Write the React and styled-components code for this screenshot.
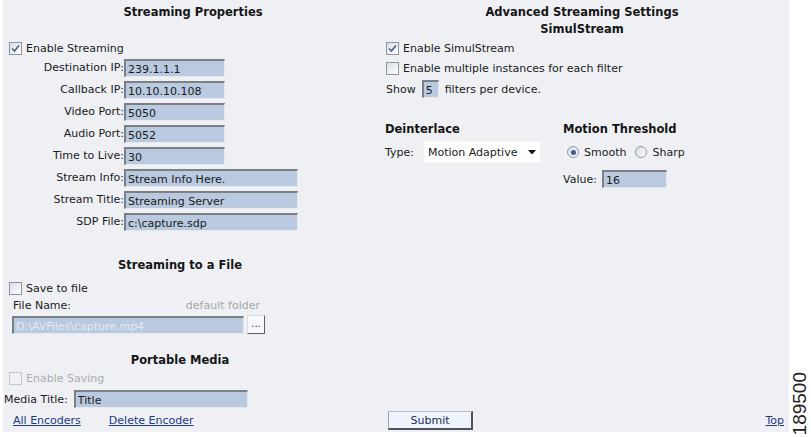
import styled, { createGlobalStyle } from "styled-components";

const GlobalStyle = createGlobalStyle`
  html, body {
    margin: 0;
    padding: 0;
    background: #ffffff;
  }
  body {
    font-family: "DejaVu Sans", Verdana, sans-serif;
    font-size: 11px;
    color: #1b1b1b;
  }
`;

const Page = styled.div`
  display: flex;
  width: 811px;
  height: 437px;
  padding-left: 3px;
  box-sizing: border-box;
`;

const Panel = styled.div`
  width: 786px;
  height: 432px;
  background: #eef0f4;
  display: grid;
  grid-template-columns: 380px 1fr;
  grid-template-rows: 1fr auto;
  padding: 5px 0 2px;
  box-sizing: border-box;
`;

const Strip = styled.div`
  flex: 1;
  display: flex;
  flex-direction: column;
  justify-content: flex-end;
  align-items: center;
  padding-bottom: 2px;
`;

const Rotated = styled.span`
  writing-mode: vertical-rl;
  transform: rotate(180deg);
  font-family: "Liberation Sans", Arial, sans-serif;
  font-size: 19px;
  line-height: 16px;
  color: #222;
`;

const Column = styled.div`
  display: flex;
  flex-direction: column;
  padding-left: ${({ $pl }) => $pl || 0}px;
`;

const Title = styled.div`
  font-weight: bold;
  font-size: 11.5px;
  line-height: 14px;
  text-align: center;
  color: #151515;
  padding-right: ${({ $pr }) => $pr || 0}px;
  margin-top: ${({ $mt }) => $mt || 0}px;
  margin-bottom: ${({ $mb }) => $mb || 0}px;
`;

const Heading = styled.div`
  font-weight: bold;
  font-size: 11.5px;
  line-height: 14px;
  color: #151515;
  margin-bottom: 5px;
`;

const CheckRow = styled.label`
  display: flex;
  align-items: center;
  gap: 4px;
  height: 18px;
  padding-left: ${({ $pl }) => $pl || 0}px;
  margin-top: ${({ $mt }) => $mt || 0}px;
  color: ${({ $disabled }) => ($disabled ? "#a9adb4" : "#1b1b1b")};
`;

const Box = styled.span`
  width: 13px;
  height: 13px;
  box-sizing: border-box;
  border: 1px solid ${({ $disabled }) => ($disabled ? "#c4c9d1" : "#8a96a8")};
  background: ${({ $disabled }) =>
    $disabled ? "#eef0f4" : "linear-gradient(135deg, #d9dee6, #ffffff)"};
  display: inline-flex;
  align-items: center;
  justify-content: center;
`;

const Radio = styled.span`
  width: 12px;
  height: 12px;
  box-sizing: border-box;
  border-radius: 50%;
  border: 1px solid #8e99aa;
  background: linear-gradient(135deg, #d6dbe3, #ffffff);
  display: inline-flex;
  align-items: center;
  justify-content: center;
  margin-left: ${({ $ml }) => $ml || 0}px;
  &::after {
    content: "";
    width: 5px;
    height: 5px;
    border-radius: 50%;
    background: ${({ $on }) => ($on ? "#3f5a86" : "transparent")};
  }
`;

const FieldGrid = styled.div`
  display: grid;
  grid-template-columns: 121px auto;
  row-gap: 4px;
  margin-top: 2px;
  align-items: center;
`;

const Label = styled.span`
  text-align: right;
  line-height: 14px;
`;

const Field = styled.input`
  width: ${({ $w }) => $w}px;
  height: 18px;
  box-sizing: border-box;
  margin: 0;
  padding: 2px 2px 0 2px;
  background: #b8c9e0;
  border-style: solid;
  border-width: 2px 1px 1px 2px;
  border-color: #7c7f84 #e6e9ee #e6e9ee #7c7f84;
  font-family: "DejaVu Sans", Verdana, sans-serif;
  font-size: 11px;
  line-height: 14px;
  color: ${({ disabled }) => (disabled ? "#e4e9f0" : "#1b1b1b")};
  outline: none;
`;

const Lower = styled.div`
  width: 354px;
  display: flex;
  flex-direction: column;
`;

const Spread = styled.div`
  display: flex;
  justify-content: space-between;
  width: 247px;
  margin-left: 10px;
  line-height: 14px;
  margin-top: 2px;
`;

const Muted = styled.span`
  color: #a3a6ab;
`;

const Inline = styled.div`
  display: flex;
  align-items: center;
  gap: ${({ $gap }) => $gap || 0}px;
  margin-left: ${({ $ml }) => $ml || 0}px;
  margin-top: ${({ $mt }) => $mt || 0}px;
  height: ${({ $h }) => ($h ? `${$h}px` : "auto")};
`;

const SmallButton = styled.span`
  width: 18px;
  height: 19px;
  box-sizing: border-box;
  background: #f6f8fc;
  border-style: solid;
  border-width: 1px;
  border-color: #d8dce3 #5e6166 #5e6166 #d8dce3;
  display: inline-flex;
  align-items: flex-end;
  justify-content: center;
  padding-bottom: 4px;
  font-size: 10px;
  line-height: 10px;
  color: #1f2e55;
`;

const Settings = styled.div`
  display: grid;
  grid-template-columns: 178px 1fr;
  margin-top: 24px;
`;

const Select = styled.div`
  width: 118px;
  height: 22px;
  box-sizing: border-box;
  background: #ffffff;
  border: 1px solid #f4f4f4;
  display: flex;
  align-items: center;
  justify-content: space-between;
  padding: 0 4px 0 4px;
`;

const Footer = styled.div`
  grid-column: 1 / span 2;
  display: grid;
  grid-template-columns: 380px 1fr;
  align-items: center;
  height: 19px;
`;

const Links = styled.div`
  display: flex;
  gap: 28px;
  padding-left: 10px;
`;

const Link = styled.a`
  color: #1d3a86;
  text-decoration: underline;
  cursor: pointer;
`;

const Actions = styled.div`
  display: flex;
  justify-content: space-between;
  align-items: center;
  padding: 0 5px;
`;

const Submit = styled.button`
  width: 85px;
  height: 19px;
  box-sizing: border-box;
  margin: 0;
  padding: 0;
  background: #eef3fc;
  border-style: solid;
  border-width: 1px 2px 2px 1px;
  border-color: #b7bcc6 #4f5257 #4f5257 #9aa0aa;
  font-family: "DejaVu Sans", Verdana, sans-serif;
  font-size: 11px;
  color: #1c2d57;
`;

const Check = () => (
  <svg width="9" height="9" viewBox="0 0 9 9">
    <path d="M1 4.5 L3.5 7 L8 1.5" fill="none" stroke="#4a5f86" strokeWidth="1.6" />
  </svg>
);

const Caret = () => (
  <svg width="8" height="5" viewBox="0 0 8 5">
    <path d="M0 0 H8 L4 4.5 Z" fill="#111" />
  </svg>
);

const fields = [
  ["Destination IP:", "239.1.1.1", 101],
  ["Callback IP:", "10.10.10.108", 101],
  ["Video Port:", "5050", 101],
  ["Audio Port:", "5052", 101],
  ["Time to Live:", "30", 101],
  ["Stream Info:", "Stream Info Here.", 174],
  ["Stream Title:", "Streaming Server", 174],
  ["SDP File:", "c:\\capture.sdp", 174],
];

export default function App() {
  return (
    <>
      <GlobalStyle />
      <Page>
        <Panel>
          <Column>
            <Title $mb={20}>Streaming Properties</Title>
            <CheckRow $pl={6}>
              <Box>
                <Check />
              </Box>
              Enable Streaming
            </CheckRow>
            <FieldGrid>
              {fields.map(([label, value, w]) => (
                <FieldRow key={label} label={label} value={value} w={w} />
              ))}
            </FieldGrid>

            <Lower>
              <Title $mt={27}>Streaming to a File</Title>
              <CheckRow $pl={6} $mt={7}>
                <Box />
                Save to file
              </CheckRow>
              <Spread>
                <span>File Name:</span>
                <Muted>default folder</Muted>
              </Spread>
              <Inline $gap={3} $ml={9} $mt={2}>
                <Field $w={232} disabled readOnly value="D:\AVFiles\capture.mp4" />
                <SmallButton>...</SmallButton>
              </Inline>
              <Title $mt={19}>Portable Media</Title>
              <CheckRow $pl={6} $mt={2} $disabled>
                <Box $disabled />
                Enable Saving
              </CheckRow>
              <Inline $gap={6} $ml={1} $mt={3}>
                <span>Media Title:</span>
                <Field $w={174} readOnly value="Title" />
              </Inline>
            </Lower>
          </Column>

          <Column $pl={2}>
            <Title $pr={10}>Advanced Streaming Settings</Title>
            <Title $pr={10} $mt={3}>
              SimulStream
            </Title>
            <CheckRow $pl={1} $mt={3}>
              <Box>
                <Check />
              </Box>
              Enable SimulStream
            </CheckRow>
            <CheckRow $pl={1} $mt={2}>
              <Box />
              Enable multiple instances for each filter
            </CheckRow>
            <Inline $gap={6} $ml={1} $mt={3}>
              <span>Show</span>
              <Field $w={17} readOnly value="5" />
              <span>filters per device.</span>
            </Inline>

            <Settings>
              <Column>
                <Heading>Deinterlace</Heading>
                <Inline $gap={9}>
                  <span>Type:</span>
                  <Select>
                    <span>Motion Adaptive</span>
                    <Caret />
                  </Select>
                </Inline>
              </Column>
              <Column>
                <Heading>Motion Threshold</Heading>
                <Inline $h={22} $ml={4} $gap={5}>
                  <Radio $on />
                  <span>Smooth</span>
                  <Radio $ml={4} />
                  <span>Sharp</span>
                </Inline>
                <Inline $gap={5} $mt={7}>
                  <span>Value:</span>
                  <Field $w={65} readOnly value="16" />
                </Inline>
              </Column>
            </Settings>
          </Column>

          <Footer>
            <Links>
              <Link>All Encoders</Link>
              <Link>Delete Encoder</Link>
            </Links>
            <Actions>
              <Submit type="button">Submit</Submit>
              <Link>Top</Link>
            </Actions>
          </Footer>
        </Panel>
        <Strip>
          <Rotated>189500</Rotated>
        </Strip>
      </Page>
    </>
  );
}

function FieldRow({ label, value, w }) {
  return (
    <>
      <Label>{label}</Label>
      <Field $w={w} readOnly value={value} />
    </>
  );
}
